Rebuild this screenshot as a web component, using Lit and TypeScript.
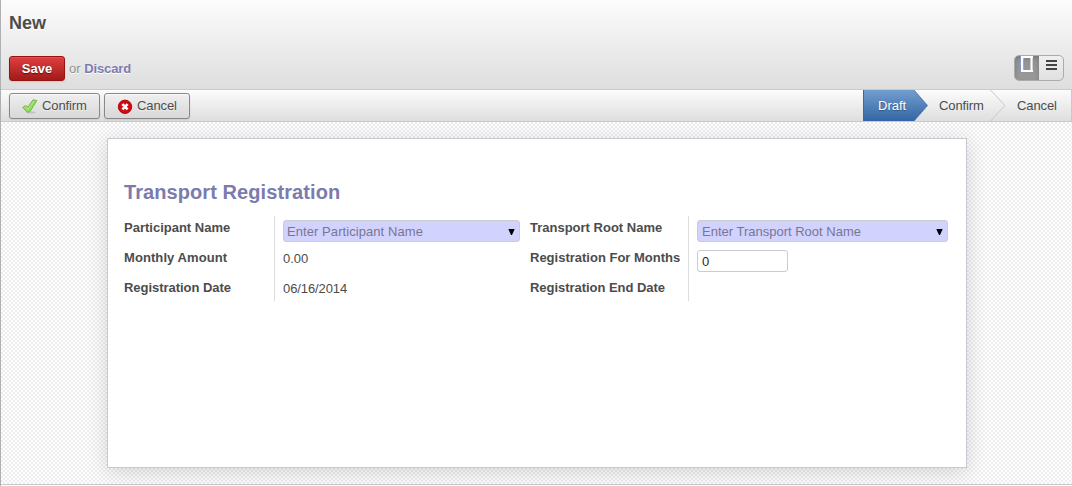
import { LitElement, html, css } from "lit";
import { customElement } from "lit/decorators.js";

const check = html`<svg class="icon" viewBox="0 0 16 16">
  <ellipse cx="9" cy="14.6" rx="5" ry="1" fill="#000" opacity=".12"></ellipse>
  <path d="M.8 9.4 3.5 7.6 6 9.2 11 1.8 14.8 2.6 8 13.6 5.2 14.2Z" fill="#95dc61" stroke="#6fb84a" stroke-width="1" stroke-linejoin="round"></path>
  <path d="M2.6 9.6 3.6 8.9 6.2 11 11.8 2.9" fill="none" stroke="#b4ee88" stroke-width=".8"></path>
</svg>`;

const cross = html`<svg class="icon" viewBox="0 0 16 16">
  <circle cx="8" cy="8.8" r="6.7" fill="#d20a10" stroke="#a80007" stroke-width=".9"></circle>
  <path d="M5.4 6.2 10.6 11.4M10.6 6.2 5.4 11.4" stroke="#fff" stroke-width="2.6"></path>
</svg>`;

@customElement("app-root")
export class AppRoot extends LitElement {
  static styles = css`
    :host {
      display: flex;
      flex-direction: column;
      box-sizing: border-box;
      height: 486px;
      border-left: 1px solid #afafb6;
      font: 13px/16px "Liberation Sans", Arial, sans-serif;
      color: #4c4c4c;
      overflow: hidden;
      white-space: nowrap;
    }
    * { box-sizing: border-box; }
    .top {
      height: 90px;
      padding: 13px 8px 0;
      border-bottom: 1px solid #cacaca;
      background: linear-gradient(#fcfcfc, #dedede);
    }
    h1 { margin: 0 0 21px; font-size: 18px; line-height: 21px; text-shadow: 0 1px 0 #fff; }
    .row { display: flex; justify-content: space-between; align-items: flex-start; }
    .actions { display: flex; align-items: center; padding-top: 1px; }
    .save {
      width: 56px; height: 25px; margin-right: 4px;
      border: 1px solid #991010; border-radius: 3px; padding: 0;
      font: bold 13px/23px "Liberation Sans", Arial, sans-serif;
      color: #fff; text-shadow: 0 1px 1px rgba(0,0,0,.5);
      background: linear-gradient(#df3f3f, #a21a1a);
      box-shadow: 0 1px 2px rgba(0,0,0,.1), 0 1px 1px rgba(255,255,255,.1) inset;
    }
    .or { color: #8f8f8f; text-shadow: 0 1px 0 #fff; }
    .or b { color: #7c7bad; letter-spacing: -.1px; }
    .switch {
      display: flex; width: 50px; height: 26px;
      border: 1px solid #ababab; border-radius: 5px; overflow: hidden;
      background: linear-gradient(#efefef, #e0e0e0);
    }
    .switch span { flex: 1; height: 24px; }
    .switch .on { background: linear-gradient(#929292, #999); box-shadow: inset 0 2px 4px rgba(0,0,0,.2); }
    .switch svg { display: block; width: 24px; height: 24px; }
    .bar {
      display: flex; justify-content: space-between;
      height: 32px; padding-left: 8px;
      border-bottom: 1px solid #cacaca;
      background: linear-gradient(#fcfcfc, #dedede);
    }
    .buttons { display: flex; gap: 4px; padding-top: 3px; }
    .btn {
      display: flex; align-items: center; height: 26px; padding: 0 0 0 12px;
      border: 1px solid #888; border-radius: 3px;
      font: 13px/24px "Liberation Sans", Arial, sans-serif; color: #4c4c4c;
      background: linear-gradient(#efefef, #d8d8d8);
      box-shadow: 0 1px 2px rgba(0,0,0,.1), 0 1px 1px rgba(255,255,255,.8) inset;
      text-shadow: 0 1px 1px rgba(255,255,255,.5);
      letter-spacing: -.1px;
    }
    .btn.ok { width: 91px; }
    .btn.no { width: 86px; }
    .icon { width: 16px; height: 16px; margin-right: 4px; }
    .status { display: flex; width: 209px; height: 31px; border-right: 1px solid #cacaca; line-height: 31px; }
    .step { display: flex; }
    .step svg { display: block; height: 31px; }
    .draft { color: #fff; text-shadow: 0 1px 1px rgba(0,0,0,.3); }
    .draft span { width: 51px; padding-left: 14px; border-left: 1px solid #3a68a5; background: linear-gradient(#729fcf, #3465a4); }
    .mid span { width: 62px; padding-left: 11px; letter-spacing: -.1px; }
    .last span { padding-left: 11px; letter-spacing: -.1px; }
    .canvas {
      height: 363px; padding: 16px 0 0 106px;
      border-bottom: 1px solid #cacaca;
      background: repeating-conic-gradient(#ededed 0 25%, #fff 0 50%) 0 0 / 4px 4px;
    }
    .sheet {
      width: 860px; height: 330px; padding: 40px 16px 0;
      background: #fff; border: 1px solid #c8c8d3;
      box-shadow: 0 4px 20px rgba(0,0,0,.15);
    }
    h2 { margin: 0 0 11px; font-size: 20px; line-height: 26px; color: #7c7bad; letter-spacing: .08px; }
    .form {
      display: grid; grid-template-columns: 151px 255px 159px 251px;
      grid-template-rows: 85px;
    }
    .labels { display: grid; grid-template-rows: 30px 30px 21px; padding-top: 4px; font-weight: bold; border-right: 1px solid #ddd; }
    .labels .tight { letter-spacing: -.04px; }
    .labels .loose { letter-spacing: .08px; }
    .values { display: grid; grid-template-rows: 30px 30px 21px; padding: 4px 0 0 8px; width: 245px; }
    .values.right { width: 259px; }
    .values span { padding-top: 1px; }
    .values .date { letter-spacing: -.1px; }
    .select {
      display: flex; justify-content: space-between; height: 22px; padding: 0 4px 0 3px;
      border: 1px solid #ccc; border-radius: 3px; background: #d2d2ff;
      color: #777693; line-height: 20px; letter-spacing: .07px;
    }
    .right .select { padding-left: 4px; letter-spacing: 0; }
    .select svg { width: 7px; height: 20px; }
    input {
      width: 91px; height: 22px; padding: 1px 4px 0; border: 1px solid #ccc; border-radius: 3px;
      font: 13px "Liberation Sans", Arial, sans-serif; color: #1f1f1f; outline: none;
    }
  `;

  select(text: string) {
    return html`<div class="select"><span>${text}</span>
      <svg viewBox="0 0 7 20"><path d="M.3 8H6.7L4 14H3Z" fill="#000"></path></svg></div>`;
  }

  render() {
    return html`
      <header class="top">
        <h1>New</h1>
        <div class="row">
          <div class="actions"><button class="save">Save</button><span class="or">or <b>Discard</b></span></div>
          <div class="switch">
            <span class="on"><svg viewBox="0 0 24 24"><path d="M5.5 0V16M15.5 2V14" stroke="#7f9bd0"></path><path d="M8.5 2V14M17.5 0V16" stroke="#d0a37c"></path><path d="M6 1H18M6 15H18" stroke="#fff" stroke-width="2"></path><path d="M7 0V16M16.5 0V16" stroke="#fff" stroke-width="2"></path></svg></span>
            <span><svg viewBox="0 0 24 24"><path d="M7 5H18M7 9H18M7 13H18" stroke="#444" stroke-width="2"></path></svg></span>
          </div>
        </div>
      </header>
      <div class="bar">
        <div class="buttons">
          <button class="btn ok">${check}Confirm</button>
          <button class="btn no">${cross}Cancel</button>
        </div>
        <div class="status">
          <div class="step draft"><span>Draft</span>
            <svg width="14" viewBox="0 0 14 31"><defs><linearGradient id="g" x2="0" y2="1"><stop stop-color="#729fcf"></stop><stop offset="1" stop-color="#3465a4"></stop></linearGradient></defs><path d="M0 0 13.5 15.5 0 31Z" fill="url(#g)"></path><path d="M0 0 13.5 15.5 0 31" fill="none" stroke="#3465a4" stroke-width=".7"></path></svg>
          </div>
          <div class="step mid"><span>Confirm</span>
            <svg width="16" viewBox="0 0 16 31"><path d="M.5 0 15 15.5.5 31" fill="none" stroke="#c8c8c8"></path></svg>
          </div>
          <div class="step last"><span>Cancel</span></div>
        </div>
      </div>
      <main class="canvas">
        <section class="sheet">
          <h2>Transport Registration</h2>
          <div class="form">
            <div class="labels"><span>Participant Name</span><span class="loose">Monthly Amount</span><span class="tight">Registration Date</span></div>
            <div class="values">${this.select("Enter Participant Name")}<span>0.00</span><span class="date">06/16/2014</span></div>
            <div class="labels"><span>Transport Root Name</span><span>Registration For Months</span><span class="tight">Registration End Date</span></div>
            <div class="values right">${this.select("Enter Transport Root Name")}<input value="0"></div>
          </div>
        </section>
      </main>
    `;
  }
}
